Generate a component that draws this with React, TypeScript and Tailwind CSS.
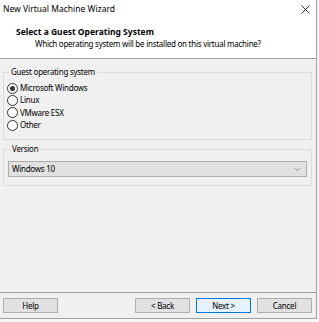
import { ChevronDown } from "lucide-react";

const options = ["Microsoft Windows", "Linux", "VMware ESX", "Other"];

function Radio({ label, checked }: { label: string; checked?: boolean }) {
  return (
    <div className="flex h-[12.3px] items-center gap-[2px]">
      <span className="flex h-[11px] w-[11px] items-center justify-center rounded-full border border-[#333] bg-white">
        {checked ? <span className="h-[5px] w-[5px] rounded-full bg-[#333]" /> : null}
      </span>
      <span>{label}</span>
    </div>
  );
}

function Button({ label, primary }: { label: string; primary?: boolean }) {
  return (
    <button
      type="button"
      className={
        primary
          ? "h-[15px] w-[55px] border border-[#0078d7] bg-[#e5f1fb] leading-none"
          : "h-[15px] w-[55px] border border-[#adadad] bg-[#e1e1e1] leading-none"
      }
    >
      {label}
    </button>
  );
}

export default function App() {
  return (
    <div className="h-[322px] w-[319px] bg-[#f7f7f7] font-['Noto_Sans',sans-serif] text-[8px] tracking-[-0.25px] text-black">
      <div className="flex h-[319px] w-[317px] flex-col border-r border-b border-[#a0a0a0] bg-[#f0f0f0]">
        <div className="flex h-[18px] items-center justify-between bg-white pl-[3px] pr-[5px] text-[8.5px] tracking-normal">
          <span>New Virtual Machine Wizard</span>
          <svg width="9" height="9" viewBox="0 0 9 9" className="mr-[1px]">
            <path d="M0.5 0.5 L8.5 8.5 M8.5 0.5 L0.5 8.5" stroke="#333" strokeWidth="1" />
          </svg>
        </div>
        <div className="h-[41px] border-b border-[#a0a0a0] bg-white pt-[7px]">
          <div className="pl-[16px] text-[8.5px] font-bold leading-[13px] tracking-normal">Select a Guest Operating System</div>
          <div className="pl-[35px] leading-[11px]">Which operating system will be installed on this virtual machine?</div>
        </div>

        <div className="flex flex-1 flex-col px-[3px] pr-[4px]">
          <fieldset className="mt-[7px] h-[74px] border border-[#dcdcdc] px-[3px]">
            <legend className="ml-[2px] px-[2px] leading-[12px]">Guest operating system</legend>
            <div className="pt-[4px]">
              {options.map((o, i) => (
                <Radio key={o} label={o} checked={i === 0} />
              ))}
            </div>
          </fieldset>

          <fieldset className="mt-[3px] h-[43px] border border-[#dcdcdc] px-[4px]">
            <legend className="ml-[2px] px-[2px] leading-[12px]">Version</legend>
            <div className="mt-[6px] flex h-[16px] items-center justify-between border border-[#adadad] bg-[#e1e1e1] pl-[3px] pr-[4px]">
              <span>Windows 10</span>
              <ChevronDown size={9} strokeWidth={1.5} color="#555" />
            </div>
          </fieldset>

          <div className="flex-1" />
        </div>

        <div className="flex h-[26px] items-start justify-between border-t border-[#a0a0a0] pt-[5px] pl-[3px] pr-[4px]">
          <Button label="Help" />
          <div className="flex gap-[6px]">
            <Button label="< Back" />
            <Button label="Next >" primary />
            <Button label="Cancel" />
          </div>
        </div>
      </div>
    </div>
  );
}
